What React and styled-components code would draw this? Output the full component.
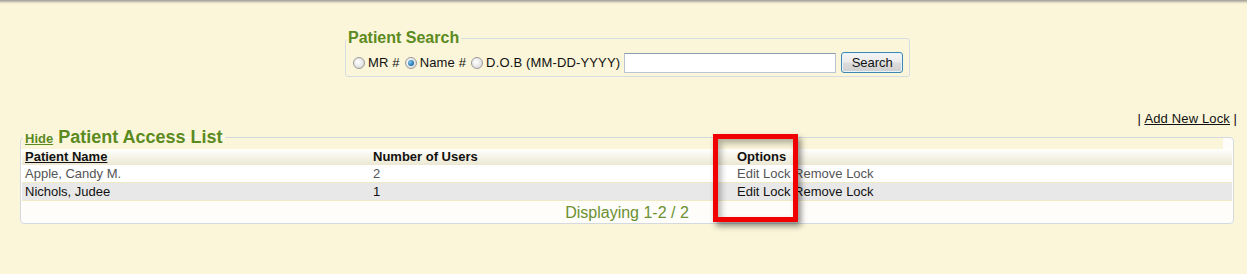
import React from "react";
import styled, { createGlobalStyle } from "styled-components";

const GlobalStyle = createGlobalStyle`
  html, body { margin: 0; padding: 0; }
  body {
    background: #fbf6d9;
    font-family: "Liberation Sans", Arial, sans-serif;
    font-size: 13px;
    color: #111;
  }
`;

const Page = styled.div`
  position: relative;
  width: 1247px;
  height: 274px;
  overflow: hidden;
  background: #fbf6d9;
`;

const TopRule = styled.div`
  height: 4px;
  background: linear-gradient(#9e9d95 0, #b5b3a8 1px, #d2cfbd 2px, #ece7cb 3px, #fbf6d9 4px);
`;

const SearchSet = styled.fieldset`
  box-sizing: border-box;
  width: 565px;
  margin: 25px 0 0 345px;
  padding: 5px 5px 3px 7px;
  border: 1px solid #d6dde2;
  border-radius: 3px;
`;

const Legend = styled.legend`
  padding: ${(p) => p.$pt}px 2px 0 2px;
  margin-left: ${(p) => p.$ml}px;
  color: #5b8a1f;
  font-weight: bold;
  font-size: ${(p) => p.$size}px;
  line-height: ${(p) => p.$lh}px;
  white-space: nowrap;
`;

const SearchRow = styled.div`
  display: flex;
  align-items: center;
  height: 21px;
  font-size: 13px;
  color: #111;
`;

const Radio = styled.span`
  box-sizing: border-box;
  width: 12px;
  height: 12px;
  border-radius: 50%;
  border: 1px solid #9a9a9a;
  background: radial-gradient(circle at 40% 40%, #ffffff 0, #e4e4e4 60%, #cfcfcf 100%);
  margin: 0 3px 0 ${(p) => p.$ml}px;
  display: inline-flex;
  align-items: center;
  justify-content: center;
  flex: none;
  &::after {
    content: "";
    width: 6px;
    height: 6px;
    border-radius: 50%;
    background: radial-gradient(circle at 35% 35%, #7fc6ee 0, #1d6fa8 70%, #0f4e7e 100%);
    display: ${(p) => (p.$checked ? "block" : "none")};
  }
`;

const RadioLabel = styled.span`
  white-space: nowrap;
  letter-spacing: 0.15px;
`;

const TextBox = styled.input`
  box-sizing: border-box;
  width: 212px;
  height: 20px;
  margin: 0 0 0 4px;
  border: 1px solid #b9c6d2;
  border-top-color: #8e9dac;
  background: #fff;
  padding: 0 2px;
  font: 13px "Liberation Sans", Arial, sans-serif;
  outline: none;
`;

const Button = styled.button`
  box-sizing: border-box;
  width: 62px;
  height: 21px;
  margin-left: 5px;
  border: 1px solid #3d87b6;
  border-radius: 3px;
  background: linear-gradient(#f4f4f4 0%, #ebebeb 48%, #dcdcdc 52%, #cfcfcf 100%);
  box-shadow: inset 0 0 0 1px #e8f3fa;
  font: 13px "Liberation Sans", Arial, sans-serif;
  color: #111;
  padding: 0;
  cursor: pointer;
`;

const LinkBar = styled.div`
  margin-top: 32px;
  height: 16px;
  line-height: 20px;
  text-align: right;
  padding-right: 10px;
  color: #111;
`;

const PlainLink = styled.a`
  color: #111;
  text-decoration: underline;
  letter-spacing: 0.15px;
`;

const ListSet = styled.fieldset`
  box-sizing: border-box;
  width: 1214px;
  margin: 0 0 0 20px;
  padding: 0 1px 0 1px;
  border: 1px solid #d3dadf;
  border-radius: 4px;
  background:
    linear-gradient(#fbf6d9, #fbf6d9) no-repeat left top / calc(100% - 10px) 11px,
    #fffdf9;
`;

const HideLink = styled.a`
  color: #5b8a1f;
  font-size: 13px;
  font-weight: bold;
  text-decoration: underline;
  margin-right: 5px;
`;

const Table = styled.table`
  width: 100%;
  border-collapse: collapse;
  table-layout: fixed;
`;

const Col = styled.col`
  width: ${(p) => p.$w}px;
`;

const HeadCell = styled.th`
  text-align: left;
  padding: 0 3px;
  height: 16px;
  line-height: 16px;
  font-size: 13px;
  font-weight: bold;
  color: #111;
  background: linear-gradient(#fffffd, #ece8d3);
`;

const HeadLink = styled.span`
  text-decoration: underline;
`;

const Row = styled.tr`
  background: ${(p) => (p.$alt ? "#e8e8e8" : "#ffffff")};
  color: ${(p) => (p.$alt ? "#111" : "#555")};
  border-bottom: 1px solid #eeebc4;
`;

const Cell = styled.td`
  box-sizing: border-box;
  padding: 1px 3px 0 3px;
  height: 17px;
  line-height: 16px;
  font-size: 13px;
  white-space: nowrap;
`;

const ActionLink = styled.a`
  color: inherit;
  text-decoration: none;
`;

const Footer = styled.div`
  height: 22px;
  line-height: 23px;
  text-align: center;
  color: #6a9030;
  font-size: 16px;
`;

const Highlight = styled.div`
  position: absolute;
  left: 713px;
  top: 134px;
  width: 85px;
  height: 88px;
  box-sizing: border-box;
  border: 5px solid #f00000;
  box-shadow: 3px 4px 6px rgba(0, 0, 0, 0.45), inset 3px 4px 6px rgba(0, 0, 0, 0.3);
  pointer-events: none;
`;

const patients = [
  { name: "Apple, Candy M.", users: 2 },
  { name: "Nichols, Judee", users: 1 },
];

export default function App() {
  return (
    <Page>
      <GlobalStyle />
      <TopRule />
      <SearchSet>
        <Legend $size={16} $lh={18} $pt={0} $ml={-7}>Patient Search</Legend>
        <SearchRow>
          <Radio $ml={0} />
          <RadioLabel>MR #</RadioLabel>
          <Radio $ml={5} $checked />
          <RadioLabel>Name #</RadioLabel>
          <Radio $ml={5} />
          <RadioLabel>D.O.B (MM-DD-YYYY)</RadioLabel>
          <TextBox type="text" />
          <Button>Search</Button>
        </SearchRow>
      </SearchSet>
      <LinkBar>
        | <PlainLink href="#">Add New Lock</PlainLink> |
      </LinkBar>
      <ListSet>
        <Legend $size={18} $lh={20} $pt={2} $ml={1}>
          <HideLink href="#">Hide</HideLink>Patient Access List
        </Legend>
        <Table>
          <colgroup>
            <Col $w={348} />
            <Col $w={364} />
            <Col $w={498} />
          </colgroup>
          <thead>
            <tr>
              <HeadCell><HeadLink>Patient Name</HeadLink></HeadCell>
              <HeadCell>Number of Users</HeadCell>
              <HeadCell>Options</HeadCell>
            </tr>
          </thead>
          <tbody>
            {patients.map((p, i) => (
              <Row key={p.name} $alt={i % 2 === 1}>
                <Cell>{p.name}</Cell>
                <Cell>{p.users}</Cell>
                <Cell>
                  <ActionLink href="#">Edit Lock</ActionLink>{" "}
                  <ActionLink href="#">Remove Lock</ActionLink>
                </Cell>
              </Row>
            ))}
          </tbody>
        </Table>
        <Footer>Displaying 1-2 / 2</Footer>
      </ListSet>
      <Highlight />
    </Page>
  );
}
